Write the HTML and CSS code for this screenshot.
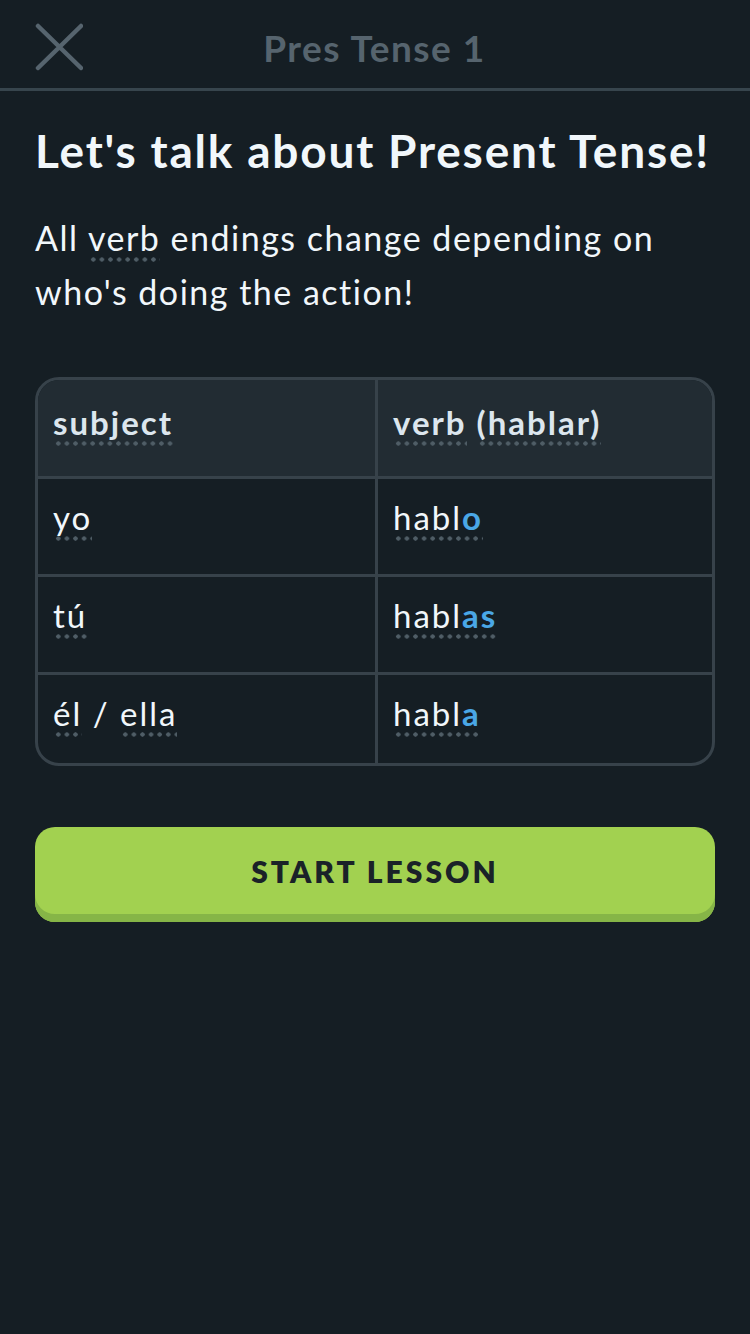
FILE: index.html
```html
<!DOCTYPE html>
<html lang="en">
<head>
<meta charset="utf-8">
<title>Pres Tense 1</title>
<link rel="stylesheet" href="styles.css">
</head>
<body>
<header class="topbar">
  <div class="close">
    <svg width="48" height="48" viewBox="0 0 48 48" aria-hidden="true">
      <path d="M3 3 L46 45 M46 3 L3 45" stroke="#56646e" stroke-width="4.5" stroke-linecap="round" fill="none"/>
    </svg>
  </div>
  <div class="title">Pres Tense 1</div>
  <div></div>
</header>
<main class="content">
  <h1 class="heading">Let's talk about Present Tense!</h1>
  <p class="intro">All <span class="hint">verb</span> endings change depending on who's doing the action!</p>

  <div class="table">
    <div class="cell head"><span class="hint">subject</span></div>
    <div class="cell head right"><span class="hint">verb</span> <span class="hint">(hablar)</span></div>

    <div class="cell"><span class="hint">yo</span></div>
    <div class="cell right"><span class="hint">habl<b class="end">o</b></span></div>

    <div class="cell"><span class="hint">tú</span></div>
    <div class="cell right"><span class="hint">habl<b class="end">as</b></span></div>

    <div class="cell last"><span class="hint">él</span> / <span class="hint">ella</span></div>
    <div class="cell right last"><span class="hint">habl<b class="end">a</b></span></div>
  </div>

  <button class="start">START LESSON</button>
</main>
</body>
</html>
```
FILE: styles.css
```css
* { box-sizing: border-box; }
html, body { margin: 0; padding: 0; }
body {
  background: #151e24;
  color: #f1f7fb;
  font-family: Lato, "Noto Sans", sans-serif;
  width: 750px;
  min-height: 1334px;
}
.topbar {
  height: 91px;
  border-bottom: 3px solid #37454d;
  display: grid;
  grid-template-columns: 1fr auto 1fr;
  align-items: center;
  padding: 6px 36px 0 35px;
}
.close { display: flex; align-items: center; }
.close svg { display: block; }
.title {
  color: #56646e;
  font-weight: 700;
  font-size: 37px;
  letter-spacing: 1.5px;
}
.content { padding: 0 35px; }
.heading {
  margin: 28px 0 0;
  font-size: 46px;
  font-weight: 700;
  line-height: 64px;
  letter-spacing: 1.8px;
  white-space: nowrap;
  color: #f1f7fb;
}
.intro {
  margin: 28px 0 0;
  font-size: 34px;
  line-height: 54px;
  font-weight: 400;
  letter-spacing: 1.5px;
  color: #f1f7fb;
}
.hint {
  padding-bottom: 4px;
  background-image: radial-gradient(circle, #4f5d66 1.9px, transparent 2.4px);
  background-size: 8.6px 5px;
  background-repeat: repeat-x;
  background-position: 1px bottom;
}
.table {
  margin-top: 58px;
  border: 3px solid #37424a;
  border-radius: 24px;
  overflow: hidden;
  display: grid;
  grid-template-columns: 337px 1fr;
  grid-template-rows: 99px 98px 98px 88px;
}
.cell {
  border-bottom: 3px solid #37424a;
  padding: 18px 15px 0;
  font-size: 33px;
  line-height: 40px;
  letter-spacing: 2px;
  color: #f1f7fb;
}
.cell.right { border-left: 3px solid #37424a; padding-left: 15px; }
.cell.last { border-bottom: none; }
.cell.head {
  background: #222c33;
  font-weight: 700;
  color: #dce6ee;
  padding-top: 22px;
}
.end { color: #4aa7e6; font-weight: 700; }
.start {
  display: block;
  width: 100%;
  margin-top: 61px;
  height: 95px;
  border: none;
  border-radius: 20px;
  background: #a2d150;
  box-shadow: inset 0 -8px 0 #86b547;
  color: #1a2228;
  font-family: Lato, "Noto Sans", sans-serif;
  font-weight: 800;
  font-size: 30px;
  letter-spacing: 3px;
  padding: 0 0 8px;
  cursor: pointer;
}
```
